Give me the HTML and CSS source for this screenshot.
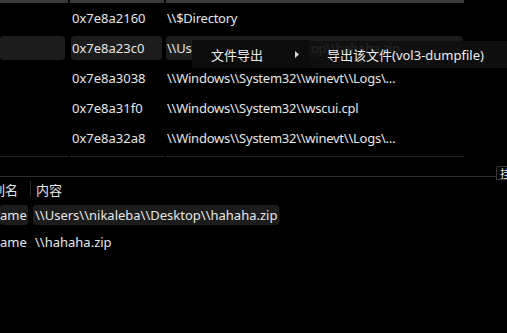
FILE: index.html
```html
<!DOCTYPE html>
<html>
<head>
<meta charset="utf-8">
<link rel="stylesheet" href="styles.css">
</head>
<body>
<div class="page">
  <div class="upper">
    <div class="grid hdr">
      <div class="hcell"></div><div class="hcell"></div><div class="hcell"></div>
    </div>
    <div class="grid row">
      <div class="cell"></div>
      <div class="cell c2"><span class="txt">0x7e8a2160</span></div>
      <div class="cell c3"><span class="txt">\\$Directory</span></div>
    </div>
    <div class="grid row sel">
      <div class="cell c1"><span class="bg"></span></div>
      <div class="cell c2"><span class="bg txt">0x7e8a23c0</span></div>
      <div class="cell c3"><span class="bg txt">\\Users\\nikaleba\\Desktop\\hahaha.zip</span></div>
    </div>
    <div class="grid row">
      <div class="cell"></div>
      <div class="cell c2"><span class="txt">0x7e8a3038</span></div>
      <div class="cell c3"><span class="txt">\\Windows\\System32\\winevt\\Logs\...</span></div>
    </div>
    <div class="grid row">
      <div class="cell"></div>
      <div class="cell c2"><span class="txt">0x7e8a31f0</span></div>
      <div class="cell c3"><span class="txt">\\Windows\\System32\\wscui.cpl</span></div>
    </div>
    <div class="grid row">
      <div class="cell"></div>
      <div class="cell c2"><span class="txt">0x7e8a32a8</span></div>
      <div class="cell c3"><span class="txt">\\Windows\\System32\\winevt\\Logs\...</span></div>
    </div>
    <div class="grid foot">
      <div class="fcell"></div><div class="fcell"></div><div class="fcell"></div>
    </div>

    <div class="menu">
      <div class="mitem">
        <span class="mlabel">文件导出</span>
        <svg class="arrow" width="4" height="7" viewBox="0 0 4 7"><path d="M0 0 L4 3.5 L0 7 Z" fill="#d8d8d8"/></svg>
      </div>
    </div>
    <div class="submenu">
      <span class="mlabel">导出该文件(vol3-dumpfile)</span>
    </div>
  </div>

  <div class="divider">
    <div class="dline"></div>
    <div class="tab">挂</div>
  </div>

  <div class="lower">
    <div class="lgrid lhdr">
      <div class="lc1 clip"><span class="shift">列名</span></div>
      <div class="lc2">内容</div>
    </div>
    <div class="lgrid lrow sel2">
      <div class="lc1"><span class="lbg first"><span class="shift">name</span></span></div>
      <div class="lc2"><span class="lbg">\\Users\\nikaleba\\Desktop\\hahaha.zip</span></div>
    </div>
    <div class="lgrid lrow">
      <div class="lc1 clip"><span class="shift">name</span></div>
      <div class="lc2"><span class="plain">\\hahaha.zip</span></div>
    </div>
  </div>
</div>
</body>
</html>
```

FILE: styles.css
```css
html, body {
  margin: 0;
  padding: 0;
  background: #000;
  width: 507px;
  height: 333px;
  overflow: hidden;
}
.page {
  font-family: "Noto Sans", "Noto Sans CJK SC", sans-serif;
  font-size: 13px;
  color: #e6e6e6;
  width: 507px;
  height: 333px;
  overflow: hidden;
  position: relative;
}
.upper {
  position: relative;
}
.grid {
  display: grid;
  grid-template-columns: 68px 94px 298px;
  column-gap: 2px;
}
.hdr {
  height: 3px;
}
.hcell {
  background: #3a3a3a;
}
.row {
  height: 30px;
  align-items: center;
}
.cell {
  display: flex;
  align-items: center;
  height: 24px;
  white-space: nowrap;
  overflow: hidden;
}
.c2 .txt { padding-left: 2px; }
.c3 .txt { padding-left: 1px; letter-spacing: -0.25px; }
.bg {
  background: #1c1c1c;
  border-radius: 4px;
  height: 24px;
  display: flex;
  align-items: center;
}
.c1 .bg { width: 65px; }
.c2 .bg { margin-left: 1px; padding-left: 1px; width: 90px; }
.c3 .bg { width: 296px; padding-left: 1px; }
.foot {
  margin-top: 3px;
  height: 1px;
}
.fcell { background: #262626; }

.menu {
  position: absolute;
  left: 192px;
  top: 40px;
  width: 118px;
  height: 28px;
  background: #0c0c0c;
  display: flex;
  align-items: center;
}
.mitem {
  display: flex;
  align-items: center;
  width: 100%;
}
.mlabel {
  color: #ececec;
  white-space: nowrap;
}
.menu .mlabel { margin-left: 19px; }
.arrow {
  margin-left: 32px;
}
.submenu {
  position: absolute;
  left: 310px;
  top: 41px;
  width: 197px;
  height: 27px;
  background: rgba(16, 16, 16, 0.9);
  display: flex;
  align-items: center;
}
.submenu .mlabel { margin-left: 17px; }

.divider {
  position: relative;
  margin-top: 19px;
  height: 1px;
}
.dline {
  width: 496px;
  height: 1px;
  background: #2e2e2e;
}
.tab {
  position: absolute;
  left: 496px;
  top: -10px;
  width: 16px;
  height: 14px;
  border: 1px solid #3a3a3a;
  border-radius: 3px 0 0 0;
  background: #000;
  font-size: 11px;
  line-height: 13px;
  color: #f0f0f0;
  padding-left: 3px;
  box-sizing: border-box;
  overflow: hidden;
}

.lgrid {
  display: grid;
  grid-template-columns: 31px 1fr;
  column-gap: 2px;
  white-space: nowrap;
}
.lhdr {
  height: 22px;
  align-items: center;
  margin-top: 1px;
}
.lhdr .lc1 {
  border-right: 1px solid #2a2a2a;
  height: 16px;
  display: flex;
  align-items: center;
}
.lhdr .lc2 { padding-left: 3px; }
.clip { overflow: hidden; }
.shift { margin-left: -8px; }
.lhdr .shift { margin-left: -8px; }
.lrow {
  height: 26px;
  align-items: center;
}
.sel2 { margin-top: 2px; margin-bottom: 1px; }
.lbg {
  display: inline-flex;
  align-items: center;
  height: 20px;
  background: #1c1c1c;
  border-radius: 3px;
  padding: 0 2px;
}
.lbg.first {
  width: 28px;
  padding: 0;
  overflow: hidden;
}
.plain { padding-left: 2px; }
```
